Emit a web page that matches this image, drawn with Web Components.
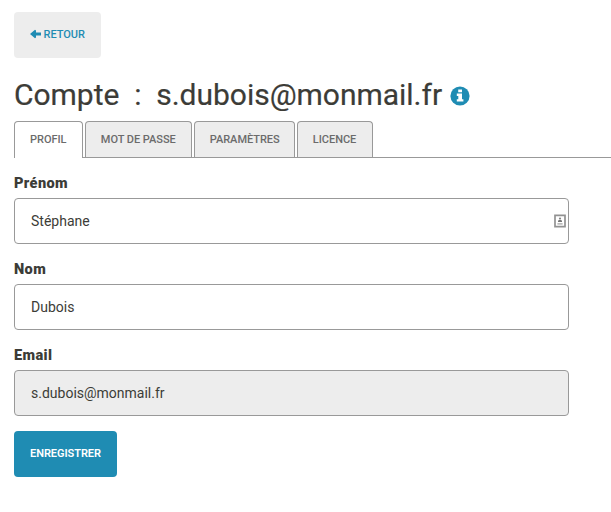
<!DOCTYPE html>
<html lang="fr">
<head>
<meta charset="utf-8">
<title>Compte</title>
<style>
html,body{margin:0;background:#fff}
body{font-family:Roboto,"Liberation Sans",sans-serif;color:#3c3c37}
</style>
</head>
<body>
<account-page></account-page>
<script>
class BaseElement extends HTMLElement {
  constructor() {
    super();
    this.attachShadow({mode: 'open'}).innerHTML = this.constructor.markup;
  }
}

class UiButton extends BaseElement {
  static markup = `<style>
    :host{display:flex;width:87px;height:46px;box-sizing:border-box;border-radius:4px;background:#ededed;color:#1f8cb3}
    :host([primary]){width:103px;background:#1f8cb3;color:#fff}
    button{all:unset;flex:1;display:flex;align-items:center;padding-left:16px;padding-bottom:2px;gap:2.6px;font-size:11px;font-weight:500;white-space:nowrap;cursor:pointer;letter-spacing:-.05px}
    :host([primary]) button{font-weight:600;letter-spacing:-.05px}
  </style><button><slot name="icon"></slot><span><slot></slot></span></button>`;
}
customElements.define('ui-button', UiButton);

class ArrowIcon extends BaseElement {
  static markup = `<style>:host,svg{display:block}</style>
  <svg width="11" height="10" viewBox="0 0 11 10"><path d="M0 5 5 .7 6 1.5V3.6H11V6.4H6V8.5L5 9.3Z" fill="#1f8cb3"/></svg>`;
}
customElements.define('arrow-icon', ArrowIcon);

class InfoIcon extends BaseElement {
  static markup = `<style>:host,svg{display:block}</style>
  <svg width="20" height="20" viewBox="0 0 20 20"><circle cx="10" cy="10" r="9.6" fill="#1f8cb3"/>
  <path d="M8.2 3.4h3.8v2.8H8.2zM6.8 7.6H12v5.7h1.4v2.3H6.8v-2.3h1.5V9.9H6.8z" fill="#fff"/></svg>`;
}
customElements.define('info-icon', InfoIcon);

class ContactIcon extends BaseElement {
  static markup = `<style>:host,svg{display:block}</style>
  <svg width="12" height="14" viewBox="0 0 12 14"><path d="M1 1.3h10v11.4H1z" fill="#fff" stroke="#929292" stroke-width="1.7"/>
  <circle cx="6" cy="4.5" r="1.1" fill="#858585"/><path d="M4 8V6.8Q6 4.9 8 6.8V8z" fill="#777"/><path d="M3.4 9h5.2v1.7H3.4z" fill="#bbb"/></svg>`;
}
customElements.define('contact-icon', ContactIcon);

class PageTitle extends BaseElement {
  static markup = `<style>
    :host{display:flex;align-items:center;height:40px;gap:8px}
    h1{margin:0;font-size:30px;line-height:40px;font-weight:400;white-space:pre;letter-spacing:-.025px;-webkit-text-stroke:.2px currentColor}
    ::slotted(info-icon){margin-top:2px}
  </style><h1><slot></slot></h1><slot name="icon"></slot>`;
}
customElements.define('page-title', PageTitle);

class TabItem extends BaseElement {
  static markup = `<style>
    :host{display:flex;box-sizing:border-box;height:36px;width:var(--w);border:1px solid #999;border-bottom:0;border-radius:4px 4px 0 0;background:#ededed;color:#6b6b6b;padding-left:14.8px;align-items:center;font-size:11px;font-weight:500;white-space:nowrap;letter-spacing:-.03px}
    :host([active]){background:#fff;height:37px;padding-left:15px;padding-bottom:1px}
  </style><span><slot></slot></span>`;
}
customElements.define('tab-item', TabItem);

class TabBar extends BaseElement {
  static markup = `<style>
    :host{display:grid;margin-left:14px}
    .line,.tabs{grid-area:1/1}
    .line{height:36px;border-bottom:1px solid #999}
    .tabs{display:flex;gap:2px;align-items:flex-start;z-index:1}
  </style><div class="line"></div><div class="tabs"><slot></slot></div>`;
}
customElements.define('tab-bar', TabBar);

class FormField extends BaseElement {
  static markup = `<style>
    :host{display:block;width:555px;height:86px}
    .label{height:26px;line-height:22px;font-size:14.6px;font-weight:900;letter-spacing:.35px}
    .box{display:flex;align-items:center;justify-content:space-between;box-sizing:border-box;height:46px;border:1px solid #999;border-radius:4px;padding:0 2px 0 16px;font-size:14px;background:#fff}
    :host([readonly]) .box{background:#ededed}
  </style><div class="label"><slot name="label"></slot></div><div class="box"><span><slot></slot></span><slot name="icon"></slot></div>`;
}
customElements.define('form-field', FormField);

class AccountPage extends BaseElement {
  static markup = `<style>
    :host{display:block;padding-top:12px}
    header{padding-left:14px}
    page-title{margin:17px 0 6px}
    main{padding:14px 0 0 14px}
    ui-button[primary]{margin-top:1px}
  </style>
  <header>
    <ui-button><arrow-icon slot="icon"></arrow-icon>RETOUR</ui-button>
    <page-title>Compte&nbsp; :&nbsp; s.dubois@monmail.fr<info-icon slot="icon"></info-icon></page-title>
  </header>
  <tab-bar>
    <tab-item active style="--w:69px">PROFIL</tab-item>
    <tab-item style="--w:107px">MOT DE PASSE</tab-item>
    <tab-item style="--w:101px">PARAMÈTRES</tab-item>
    <tab-item style="--w:76px">LICENCE</tab-item>
  </tab-bar>
  <main>
    <form-field><span slot="label">Prénom</span>Stéphane<contact-icon slot="icon"></contact-icon></form-field>
    <form-field><span slot="label">Nom</span>Dubois</form-field>
    <form-field readonly><span slot="label">Email</span>s.dubois@monmail.fr</form-field>
    <ui-button primary>ENREGISTRER</ui-button>
  </main>`;
}
customElements.define('account-page', AccountPage);
</script>
</body>
</html>
